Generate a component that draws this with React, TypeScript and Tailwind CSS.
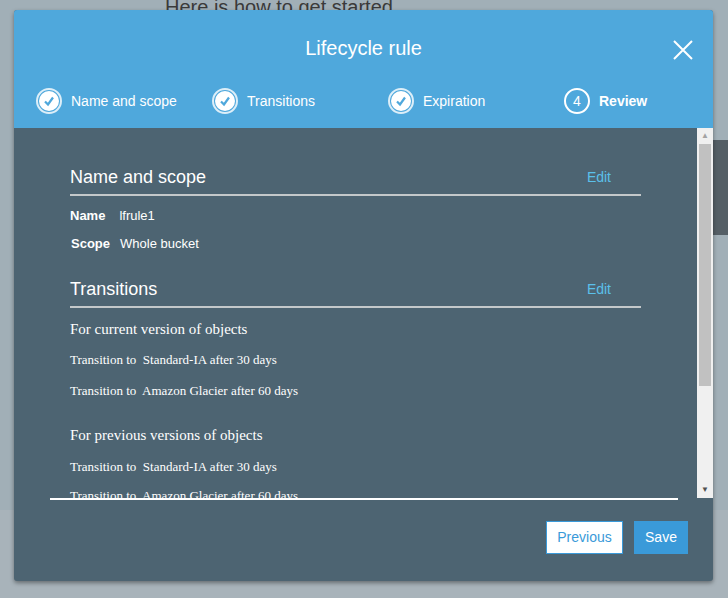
import React from "react"

const sans = "font-[family-name:Liberation_Sans,Arial,sans-serif]"
const serif = "font-[family-name:Liberation_Serif,Times_New_Roman,serif]"

function Check() {
  return (
    <span className="flex h-[26px] w-[26px] items-center justify-center rounded-full border-2 border-white/80">
      <span className="flex h-[20px] w-[20px] items-center justify-center rounded-full bg-white">
        <svg width="14" height="14" viewBox="0 0 14 14">
          <path d="M3 7.5 L6 10.5 L11 3.5" fill="none" stroke="#4fa8dc" strokeWidth="2.2" />
        </svg>
      </span>
    </span>
  )
}

function Step({ label, done, num }: { label: string; done?: boolean; num?: number }) {
  return (
    <div className="flex items-center gap-[9px]">
      {done ? (
        <Check />
      ) : (
        <span className="flex h-[26px] w-[26px] items-center justify-center rounded-full border-2 border-white text-[14px] text-white">
          {num}
        </span>
      )}
      <span className={`text-[14px] text-white ${done ? "" : "font-bold"}`}>{label}</span>
    </div>
  )
}

function SectionHead({ title }: { title: string }) {
  return (
    <div className="flex items-center justify-between border-b-2 border-[#c4c8ca] pb-[6px] pr-[30px] leading-[22px]">
      <span className="text-[18px] text-white">{title}</span>
      <span className="text-[14px] text-[#5bc0ea]">Edit</span>
    </div>
  )
}

export default function App() {
  return (
    <div className={`relative h-[598px] w-[728px] overflow-hidden bg-[#a1afb7] ${sans}`}>
      <div className="-mt-[3px] pl-[165px] text-[20px] leading-none text-[#3a3a3a]">Here is how to get started</div>
      <div className="absolute left-[713px] top-[140px] h-[95px] w-[15px] bg-[#555f66]" />
      <div className="absolute left-0 top-[510px] h-[88px] w-[728px] bg-[#a8b3ba]" />

      <div className="absolute left-[14px] top-[10px] flex h-[571px] w-[699px] flex-col overflow-hidden rounded-[3px] bg-[#4d6472] shadow-[0_2px_4px_rgba(0,0,0,0.4)]">
        <div className="relative h-[118px] bg-[#4fa8dc]">
          <div className="pt-[26px] text-center text-[20px] leading-[24px] text-white">Lifecycle rule</div>
          <svg className="absolute right-[20px] top-[30px]" width="20" height="20" viewBox="0 0 20 20">
            <path d="M1 1 L19 19 M19 1 L1 19" stroke="white" strokeWidth="2" />
          </svg>
          <div className="absolute left-[22px] top-[78px] flex">
            <div className="w-[176px]"><Step label="Name and scope" done /></div>
            <div className="w-[176px]"><Step label="Transitions" done /></div>
            <div className="w-[176px]"><Step label="Expiration" done /></div>
            <Step label="Review" num={4} />
          </div>
        </div>

        <div className="flex h-[370px]">
          <div className="flex-1 overflow-hidden pl-[56px] pr-[56px] pt-[38px]">
            <SectionHead title="Name and scope" />
            <div className="mt-[12px] flex gap-[14px] text-[13px] leading-[16px] text-white">
              <b>Name</b><span>lfrule1</span>
            </div>
            <div className="mt-[12px] flex gap-[10px] pl-[1px] text-[13px] leading-[16px] text-white">
              <b>Scope</b><span>Whole bucket</span>
            </div>
            <div className="mt-[26px]"><SectionHead title="Transitions" /></div>
            <div className={`text-white ${serif}`}>
              <div className="mt-[12px] text-[15px] leading-[18px]">For current version of objects</div>
              <div className="mt-[14px] text-[13px] leading-[16px]">Transition to&nbsp; Standard-IA after 30 days</div>
              <div className="mt-[15px] text-[13px] leading-[16px]">Transition to&nbsp; Amazon Glacier after 60 days</div>
              <div className="mt-[27px] text-[15px] leading-[18px]">For previous versions of objects</div>
              <div className="mt-[15px] text-[13px] leading-[16px]">Transition to&nbsp; Standard-IA after 30 days</div>
              <div className="mt-[13px] text-[13px] leading-[16px]">Transition to&nbsp; Amazon Glacier after 60 days</div>
            </div>
          </div>
          <div className="flex w-[16px] flex-col bg-[#f0f0f0]">
            <div className="h-[16px] text-center text-[8px] leading-[16px] text-[#a3a3a3]">▲</div>
            <div className="mx-[2px] h-[242px] bg-[#c1c1c1]" />
            <div className="flex-1" />
            <div className="h-[16px] text-center text-[8px] leading-[16px] text-[#505050]">▼</div>
          </div>
        </div>
        <div className="ml-[36px] mr-[35px] h-[2px] bg-white" />

        <div className="mt-[21px] flex justify-end gap-[11px] pr-[25px]">
          <button className="h-[33px] w-[77px] border border-[#3a9ad9] bg-white text-[14px] text-[#3a9ad9]">Previous</button>
          <button className="h-[33px] w-[54px] bg-[#3a9ad9] text-[14px] text-white">Save</button>
        </div>
      </div>
    </div>
  )
}
